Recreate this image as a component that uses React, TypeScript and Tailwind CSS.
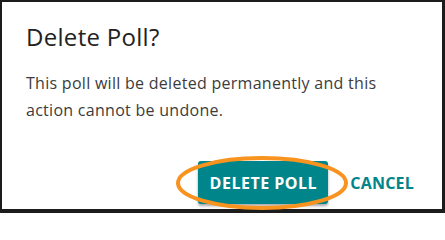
export default function App() {
  return (
    <div
      className="relative w-[445px] h-[213px] bg-white border-[#1c1c1c] border-l-2 border-t-2 border-r-[3px] border-b-[4px] text-[#333333]"
      style={{ fontFamily: '"Open Sans", "Liberation Sans", sans-serif' }}
    >
      <div className="pl-[24px] pr-[28px] pt-[19px]">
        <h2 className="text-[24px] leading-[32px] tracking-[0.3px] text-[#222222] font-normal">
          Delete Poll?
        </h2>
        <p className="mt-[17px] max-w-[372px] text-[16px] leading-[27px] tracking-[0.28px] text-[#3c3c3c]">
          This poll will be deleted permanently and this action cannot be undone.
        </p>
        <div className="mt-[37px] flex justify-end items-center">
          <button className="w-[130px] h-[43px] rounded-[3px] bg-[#00858a] text-white font-bold text-[16px] leading-[16px] tracking-[0.5px] shadow-[0_2px_3px_rgba(0,0,0,0.35)] flex items-center justify-center">
            DELETE POLL
          </button>
          <button className="ml-[22px] text-[#00858a] font-bold text-[16px] leading-[16px] tracking-[0.2px]">
            CANCEL
          </button>
        </div>
      </div>
      {/* annotation ring */}
      <svg
        className="absolute -left-[2px] -top-[2px] pointer-events-none"
        width="445"
        height="213"
        viewBox="0 0 445 213"
      >
        <ellipse cx="262" cy="183" rx="84" ry="25" fill="none" stroke="#f7931e" strokeWidth="4" />
      </svg>
    </div>
  );
}
